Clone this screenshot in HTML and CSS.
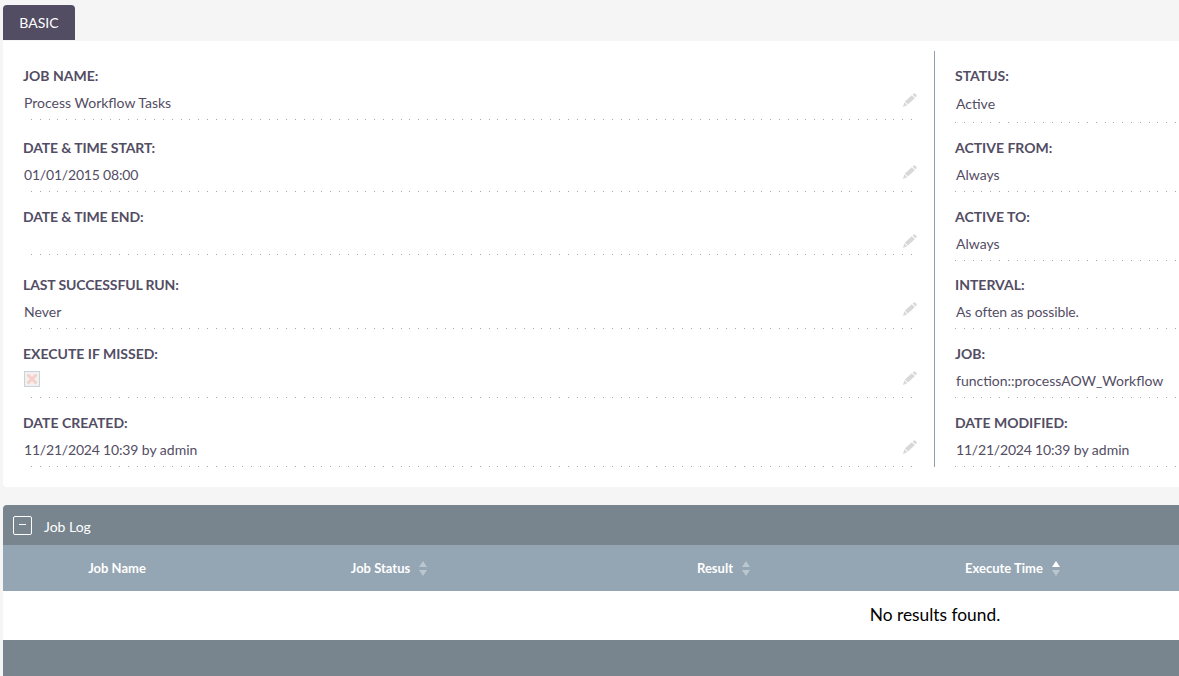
FILE: index.html
```html
<!DOCTYPE html>
<html lang="en">
<head>
<meta charset="utf-8">
<title>Job Detail</title>
<link rel="stylesheet" href="styles.css">
</head>
<body>
<svg class="defs" width="0" height="0" aria-hidden="true">
  <symbol id="pencil" viewBox="0 0 14 14">
    <path d="M9.6 1.4 10.9 .4a.8.8 0 0 1 1 0l1.7 1.7a.8.8 0 0 1 0 1L12.5 4.4ZM8.8 2.2l3 3-6.9 6.4-3-3ZM1.3 9.3l3 3L0 14Z"/>
  </symbol>
</svg>
<main class="page">
  <nav class="tabs"><span class="tab">BASIC</span></nav>
  <section class="panel">
    <div class="col col-left">
      <div class="field first"><div class="label">JOB NAME:</div><div class="value">Process Workflow Tasks<svg class="pencil"><use href="#pencil"/></svg></div></div>
      <div class="field"><div class="label tight">DATE &amp; TIME START:</div><div class="value"><span class="date">01/01/2015 08:00</span><svg class="pencil"><use href="#pencil"/></svg></div></div>
      <div class="field"><div class="label tight">DATE &amp; TIME END:</div><div class="value empty"><svg class="pencil"><use href="#pencil"/></svg></div></div>
      <div class="field"><div class="label tight">LAST SUCCESSFUL RUN:</div><div class="value">Never<svg class="pencil"><use href="#pencil"/></svg></div></div>
      <div class="field"><div class="label">EXECUTE IF MISSED:</div><div class="value"><span class="check"><svg viewBox="0 0 14 14"><path d="M2.5 2.5 11.5 11.5M11.5 2.5 2.5 11.5"/></svg></span><svg class="pencil"><use href="#pencil"/></svg></div></div>
      <div class="field"><div class="label">DATE CREATED:</div><div class="value"><span class="date">11/21/2024 10:39</span> by admin<svg class="pencil"><use href="#pencil"/></svg></div></div>
    </div>
    <div class="col col-right">
      <div class="field first"><div class="label">STATUS:</div><div class="value">Active</div></div>
      <div class="field"><div class="label">ACTIVE FROM:</div><div class="value">Always</div></div>
      <div class="field"><div class="label">ACTIVE TO:</div><div class="value">Always</div></div>
      <div class="field"><div class="label">INTERVAL:</div><div class="value tight">As often as possible.</div></div>
      <div class="field"><div class="label">JOB:</div><div class="value">function::processAOW_Workflow</div></div>
      <div class="field"><div class="label">DATE MODIFIED:</div><div class="value"><span class="date">11/21/2024 10:39</span> by admin</div></div>
    </div>
  </section>
  <section class="log">
    <header class="log-head"><span class="toggle"></span><span class="log-title">Job Log</span></header>
    <table class="log-table">
      <thead>
        <tr>
          <th class="c1">Job Name</th>
          <th class="c2">Job Status<span class="sort"></span></th>
          <th class="c3">Result<span class="sort"></span></th>
          <th class="c4">Execute Time<span class="sort asc"></span></th>
          <th class="c5"></th>
        </tr>
      </thead>
      <tbody>
        <tr><td colspan="5">No results found.</td></tr>
      </tbody>
    </table>
    <div class="log-foot"></div>
  </section>
</main>
</body>
</html>
```
FILE: styles.css
```css
html, body {
  margin: 0;
  height: 676px;
  overflow: hidden;
  background: #f5f5f5;
}
.defs { position: absolute; }
.page {
  width: 1864px;
  margin-left: 3px;
  font-family: Lato, "Liberation Sans", sans-serif;
  font-size: 14px;
  color: #534d64;
}
.tabs {
  height: 41px;
  padding-top: 5px;
  box-sizing: border-box;
}
.tab {
  display: block;
  width: 72px;
  height: 35px;
  line-height: 36px;
  text-align: center;
  color: #fff;
  background: #534d64;
  border-radius: 4px 4px 0 0;
}
.panel {
  display: flex;
  height: 446px;
  box-sizing: border-box;
  padding: 10px 0 20px;
  background: #fff;
  border-radius: 0 0 4px 4px;
}
.col { width: 50%; box-sizing: border-box; }
.col-left { width: 932px; padding-left: 20px; border-right: 1px solid #8f9fac; }
.col-right { padding-left: 20px; }
.field { height: 68.7px; box-sizing: border-box; padding-top: 16px; }
.field.first { height: 72px; }
.label {
  font-weight: 700;
  line-height: 18px;
}
.tight { letter-spacing: -.12px; }
.date {
  font-variant-numeric: tabular-nums;
  letter-spacing: -.19px;
}
.value {
  position: relative;
  height: 27px;
  margin-top: 8px;
  padding-left: 1px;
  line-height: 19px;
  background: repeating-linear-gradient(90deg, #a8a8a8 0 1px, transparent 1px 8.8px) 8px 100% / 100% 1px no-repeat;
}
.value.empty { height: 21px; }
.col-left .value { margin-right: 17px; }
.col-right .value { background-position: 0 100%; }
.col-right .first .value { height: 29px; margin-top: 9px; }
.pencil {
  position: absolute;
  right: 0;
  top: 0;
  width: 14px;
  height: 14px;
  fill: #d8d8d8;
}
.check {
  display: block;
  width: 14px;
  height: 14px;
  margin-top: 1px;
  border: 1px solid #c8d2da;
  background: #f1f1f1;
}
.check svg {
  display: block;
  width: 14px;
  height: 14px;
  fill: none;
  stroke: #f7cfc9;
  stroke-width: 3;
}
.log { margin-top: 18px; }
.log-head {
  display: flex;
  align-items: center;
  gap: 12px;
  height: 40px;
  padding-left: 10px;
  color: #fff;
  background: #78858f;
  border-radius: 4px 4px 0 0;
}
.log-title { padding-top: 2px; }
.toggle {
  position: relative;
  width: 17px;
  height: 17px;
  border: 1px solid #fff;
  border-radius: 2px;
}
.toggle::after {
  content: "";
  position: absolute;
  left: 5px;
  top: 7px;
  width: 7px;
  height: 1px;
  background: #fff;
}
.log-table {
  width: 100%;
  table-layout: fixed;
  border-collapse: collapse;
  background: #fff;
}
.log-table th {
  height: 46px;
  padding: 0;
  color: #fff;
  font-size: 13px;
  font-weight: 700;
  background: #94a5b3;
}
.c1 { width: 228px; }
.c2 { width: 317px; }
.c3 { width: 352px; }
.c4 { width: 226px; }
.sort {
  display: inline-block;
  position: relative;
  width: 9px;
  height: 15px;
  margin-left: 9px;
  vertical-align: -3px;
}
.sort::before, .sort::after {
  content: "";
  position: absolute;
  left: 0;
  border-left: 4.5px solid transparent;
  border-right: 4.5px solid transparent;
}
.sort::before { top: 0; border-bottom: 6px solid #bcc6cf; }
.sort::after { bottom: 0; border-top: 6px solid #bcc6cf; }
.sort.asc::before { border-bottom-color: #fff; }
.log-table td {
  height: 47px;
  padding: 0 0 2px;
  color: #000;
  font-size: 17.33px;
  text-align: center;
}
.log-foot { height: 40px; background: #78858f; }
```
